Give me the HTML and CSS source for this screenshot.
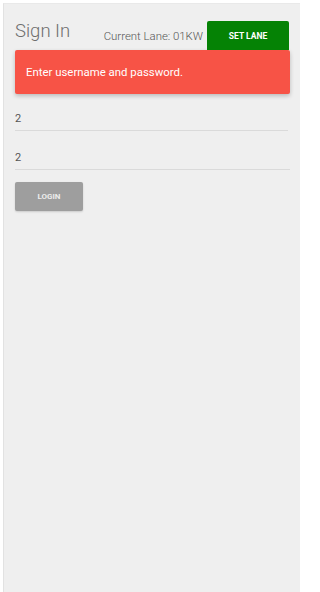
FILE: index.html
```html
<!DOCTYPE html>
<html>
<head>
<meta charset="utf-8">
<link rel="stylesheet" href="styles.css">
</head>
<body>
<div class="page">
  <div class="header">
    <h1 class="title">Sign In</h1>
    <div class="lane">Current Lane: 01KW</div>
    <button class="btn btn-lane">SET LANE</button>
  </div>
  <div class="alert">Enter username and password.</div>
  <div class="field field-first">2</div>
  <div class="field field-second">2</div>
  <button class="btn btn-login">LOGIN</button>
</div>
</body>
</html>
```
FILE: styles.css
```css
html, body {
  margin: 0;
  padding: 0;
  background: #ffffff;
}
body {
  width: 306px;
  font-family: Roboto, "Liberation Sans", sans-serif;
}
.page {
  box-sizing: border-box;
  width: 297px;
  height: 589px;
  margin: 3px 0 0 3px;
  background: #efefef;
  border-left: 1px solid #e2e2e2;
  border-top: 1px solid #e9e9e9;
  padding: 17px 10px 0 11px;
}
.header {
  display: flex;
  align-items: flex-end;
  height: 29px;
}
.title {
  margin: 0 0 10px 0;
  font-size: 18.5px;
  font-weight: 300;
  color: #6e6e6e;
  line-height: 18px;
}
.lane {
  margin-left: auto;
  margin-right: 4px;
  margin-bottom: 8px;
  font-size: 11.4px;
  font-weight: 300;
  color: #555555;
  line-height: 12px;
}
.btn {
  border: 0;
  font-family: Roboto, "Liberation Sans", sans-serif;
  font-weight: 700;
  padding: 0;
  cursor: pointer;
}
.btn-lane {
  width: 82px;
  height: 29px;
  margin-right: 1px;
  background: #058205;
  color: #ffffff;
  font-size: 8.5px;
  border-radius: 2px 2px 0 0;
}
.alert {
  height: 44px;
  box-sizing: border-box;
  background: #f75346;
  color: #ffffff;
  font-size: 11.4px;
  display: flex;
  align-items: center;
  padding-left: 11px;
  border-radius: 2px;
  box-shadow: 0 2px 4px rgba(0, 0, 0, 0.22);
}
.field {
  height: 22px;
  line-height: 22px;
  font-size: 11px;
  color: #555555;
  border-bottom: 1px solid #dadada;
}
.field-first {
  margin-top: 14px;
  margin-right: 2px;
}
.field-second {
  margin-top: 16px;
}
.btn-login {
  display: block;
  margin-top: 12px;
  width: 68px;
  height: 29px;
  background: #9e9e9e;
  color: #ececec;
  font-size: 8px;
  border-radius: 2px;
  box-shadow: 0 1px 2px rgba(0, 0, 0, 0.15);
}
```
